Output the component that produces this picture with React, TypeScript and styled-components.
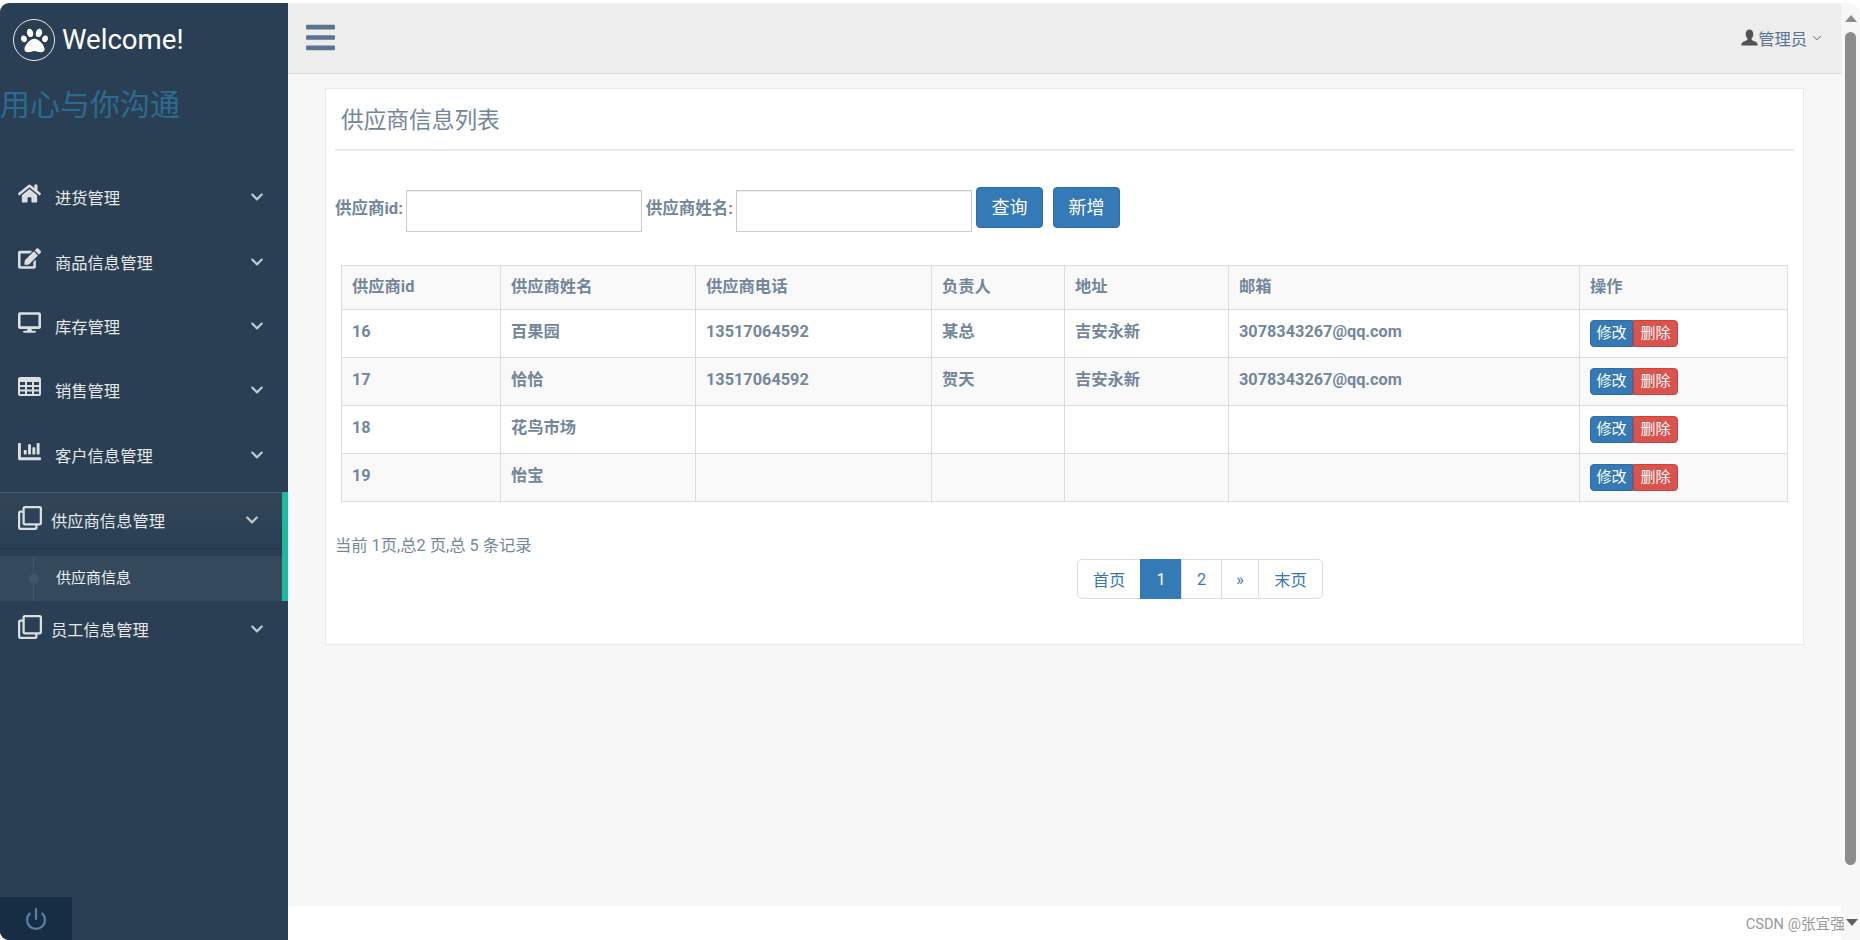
import React from "react";
import styled, { createGlobalStyle } from "styled-components";
import {
  FaBars,
  FaChevronDown,
  FaDesktop,
  FaEdit,
  FaHome,
  FaPaw,
  FaChartBar,
  FaRegClone,
} from "react-icons/fa";
import { ChevronDown, Power } from "lucide-react";

const GlobalStyle = createGlobalStyle`
  html, body {
    margin: 0;
    padding: 0;
    height: 100%;
    overflow: hidden;
    background: #fff;
  }
  * { box-sizing: border-box; }
  body {
    font-family: Roboto, "Noto Sans CJK SC", sans-serif;
    font-size: 16.3px;
    color: #73879c;
  }
`;

const Page = styled.div`
  width: 1860px;
  height: 940px;
  display: flex;
  padding-top: 3px;
  position: relative;
  overflow: hidden;
`;

const Sidebar = styled.aside`
  width: 288px;
  flex: none;
  background: #2a3f54;
  border-radius: 9px 0 0 9px;
  display: flex;
  flex-direction: column;
  color: #ecf0f1;
`;

const Brand = styled.div`
  height: 60px;
  margin-top: 16px;
  padding-left: 13px;
  display: flex;
  align-items: flex-start;
  gap: 7px;
  color: #fff;
  font-size: 27.6px;
  line-height: 42px;
`;

const BrandIcon = styled.span`
  width: 42px;
  height: 42px;
  border: 1px solid #e8e8e8;
  border-radius: 50%;
  display: flex;
  align-items: center;
  justify-content: center;
  font-size: 27px;
`;

const Tagline = styled.div`
  font-size: 30px;
  line-height: 40px;
  color: #2b6b8f;
  height: 80px;
  margin-top: 6px;
`;

const Nav = styled.nav`
  display: flex;
  flex-direction: column;
  flex: 1;
`;

const NavRow = styled.div`
  height: 64.4px;
  flex: none;
  display: flex;
  align-items: center;
  padding: 0 24px 0 18px;
  color: #e7e7e7;
`;

const NavIcon = styled.span<{ $wide?: boolean; $lift?: number }>`
  width: ${(p) => (p.$wide ? 33 : 37)}px;
  flex: none;
  display: flex;
  align-items: center;
  font-size: ${(p) => (p.$wide ? 24 : 23)}px;
  margin-bottom: ${(p) => p.$lift ?? 7}px;
  color: #dcdfe2;
`;

const NavLabel = styled.span`
  flex: 1;
`;

const Chevron = styled(FaChevronDown)`
  font-size: 14px;
  color: #c3c8cd;
`;

const ActiveGroup = styled.div`
  margin-top: 5px;
  border-right: 6px solid #1abb9c;
`;

const ActiveRow = styled(NavRow)`
  height: 57px;
  padding-right: 23px;
  border-top: 1px solid #4a5c6e;
  border-bottom: 1px solid #23364a;
  background: linear-gradient(#334556, #2c4257 60%, #2a3f54);
`;

const LastRow = styled(NavRow)`
  height: 57px;
`;

const Gap = styled.div`
  height: 7px;
  background: #2a3f54;
`;

const SubRow = styled.div`
  height: 45px;
  padding: 0 0 4px 56px;
  display: flex;
  align-items: center;
  font-size: 15px;
  background: #35495d;
  color: #f0f0f0;
  position: relative;
`;

const SubLine = styled.span`
  position: absolute;
  left: 33px;
  top: 0;
  bottom: 0;
  width: 1px;
  background: #425567;
`;

const SubDot = styled.span`
  position: absolute;
  left: 29px;
  top: 18px;
  width: 10px;
  height: 10px;
  border-radius: 50%;
  background: #425567;
`;

const PowerBox = styled.div`
  width: 72px;
  height: 43px;
  background: #172d44;
  color: #5a80a8;
  border-bottom-left-radius: 9px;
  display: flex;
  align-items: center;
  justify-content: center;
  margin-top: auto;
`;

const Main = styled.div`
  flex: 1;
  display: flex;
  flex-direction: column;
  min-width: 0;
`;

const TopBar = styled.header`
  height: 71px;
  flex: none;
  background: #ededed;
  border-bottom: 1px solid #d9dee4;
  display: flex;
  align-items: center;
  justify-content: space-between;
  padding: 0 17px 0 16px;
`;

const MenuButton = styled(FaBars)`
  font-size: 33px;
  color: #5a738e;
  margin-top: -2px;
`;

const UserMenu = styled.div`
  display: flex;
  align-items: center;
  color: #515356;
  margin-top: -1px;
`;

const UserName = styled.span`
  color: #5a738e;
  margin-right: 3px;
`;

const Content = styled.main`
  height: 832px;
  flex: none;
  background: #f7f7f7;
  padding: 14px 37px 0 37px;
`;

const Panel = styled.section`
  height: 557px;
  background: #fff;
  border: 1px solid #e6e9ed;
  padding: 0 9px;
`;

const Title = styled.div`
  height: 62px;
  margin-bottom: 36px;
  border-bottom: 2px solid #e6e9ed;
  padding: 13px 0 0 6px;
  font-size: 22.7px;
  line-height: 38px;
`;

const SearchForm = styled.form`
  display: flex;
  align-items: flex-start;
  height: 78px;
`;

const FieldLabel = styled.label<{ $gap: number }>`
  font-weight: 700;
  font-size: 16.5px;
  line-height: 44px;
  margin-right: ${(p) => p.$gap}px;
`;

const Input = styled.input`
  width: 236px;
  height: 42px;
  margin: 3px 4px 0 0;
  border: 1px solid #ccc;
  background: #fff;
  box-shadow: inset 0 1px 1px rgba(0, 0, 0, 0.075);
`;

const SearchButton = styled.button`
  width: 67px;
  height: 41px;
  margin-right: 10px;
  padding: 0 0 4px;
  border: 1px solid #2e6da4;
  border-radius: 4px;
  background: #337ab7;
  color: #fff;
  font: 400 18px Roboto, "Noto Sans CJK SC", sans-serif;
`;

const Table = styled.table`
  width: 1446px;
  margin-left: 6px;
  border-collapse: collapse;
  table-layout: fixed;
  line-height: 22px;
`;

const Th = styled.th<{ $w: number }>`
  width: ${(p) => p.$w}px;
  height: 44px;
  padding: 0 10px 2px;
  text-align: left;
  font-weight: 700;
  border: 1px solid #ddd;
  background: #f9f9f9;
`;

const Tr = styled.tr<{ $odd: boolean }>`
  background: ${(p) => (p.$odd ? "#f9f9f9" : "#fff")};
`;

const Td = styled.td`
  height: 48px;
  padding: 0 10px 4px;
  font-weight: 700;
  border: 1px solid #ddd;
`;

const ActionGroup = styled.div`
  display: flex;
  margin-top: 4px;
`;

const ActionButton = styled.button<{ $danger?: boolean }>`
  height: 27px;
  width: ${(p) => (p.$danger ? 45 : 43)}px;
  padding: 0;
  border: 1px solid ${(p) => (p.$danger ? "#d43f3a" : "#2e6da4")};
  border-radius: ${(p) => (p.$danger ? "0 4px 4px 0" : "4px 0 0 4px")};
  background: ${(p) => (p.$danger ? "#d9534f" : "#337ab7")};
  color: #fff;
  font: 400 15px/1 Roboto, "Noto Sans CJK SC", sans-serif;
`;

const Summary = styled.div`
  margin-top: 32px;
  line-height: 24px;
`;

const Pager = styled.ul`
  list-style: none;
  display: inline-flex;
  margin: 1px 0 0 742px;
  padding: 0;
`;

const PageItem = styled.li<{ $active?: boolean; $w: number }>`
  width: ${(p) => p.$w}px;
  height: 40px;
  display: flex;
  align-items: center;
  justify-content: center;
  margin-left: -1px;
  color: ${(p) => (p.$active ? "#fff" : "#337ab7")};
  background: ${(p) => (p.$active ? "#337ab7" : "#fff")};
  border: 1px solid ${(p) => (p.$active ? "#337ab7" : "#ddd")};
  &:first-child {
    border-radius: 5px 0 0 5px;
    margin-left: 0;
  }
  &:last-child {
    border-radius: 0 5px 5px 0;
  }
`;

const Scrollbar = styled.div`
  width: 19px;
  flex: none;
  background: #f7f7f7;
  border-top-right-radius: 12px;
  display: flex;
  flex-direction: column;
  align-items: center;
  padding: 12px 2px 0 2px;
`;

const ArrowUp = styled.span`
  width: 0;
  height: 0;
  border: 6.5px solid transparent;
  border-top: 0;
  border-bottom: 7px solid #8c8c8c;
`;

const Thumb = styled.span`
  width: 11px;
  height: 833px;
  margin-top: 10px;
  border-radius: 6px;
  background: #8c8c8c;
`;

const Watermark = styled.div`
  position: absolute;
  right: 15px;
  bottom: 6px;
  font-size: 14.7px;
  line-height: 20px;
  color: #9a9a9a;
  background: #fff;
`;

const ArrowDown = styled.span`
  position: absolute;
  right: 2px;
  bottom: 14px;
  width: 0;
  height: 0;
  border: 6.5px solid transparent;
  border-bottom: 0;
  border-top: 7px solid #5f5f5f;
`;

function TableGlyph() {
  return (
    <svg width="23" height="19" viewBox="0 0 23 19">
      <path
        fill="currentColor"
        fillRule="evenodd"
        d="M2 0h19a2 2 0 0 1 2 2v15a2 2 0 0 1-2 2H2a2 2 0 0 1-2-2V2a2 2 0 0 1 2-2zM2 5v3h5V5zm7 0v3h5V5zm7 0v3h5V5zM2 10v2.500h5V10zm7 0v2.500h5V10zm7 0v2.500h5V10zM2 14.500V17h5v-2.500zm7 0V17h5v-2.500zm7 0V17h5v-2.500z"
      />
    </svg>
  );
}

function UserGlyph() {
  return (
    <svg width="17" height="17" viewBox="0 0 17 17">
      <path
        fill="#515356"
        d="M8.5 0.5c2.4 0 3.8 1.9 3.8 4.4 0 1.9-.8 3.6-1.8 4.6-.3.9.2 1.4 1.2 1.9 2 .9 4.3 1.7 4.8 3.2.1.6.1 1.2.1 1.9H.4c0-.7 0-1.3.1-1.9.5-1.5 2.8-2.3 4.8-3.2 1-.5 1.5-1 1.2-1.9-1-1-1.8-2.7-1.8-4.6 0-2.5 1.4-4.4 3.8-4.4z"
      />
    </svg>
  );
}

const menu = [
  { label: "进货管理", icon: <FaHome /> },
  { label: "商品信息管理", icon: <FaEdit /> },
  { label: "库存管理", icon: <FaDesktop /> },
  { label: "销售管理", icon: <TableGlyph /> },
  { label: "客户信息管理", icon: <FaChartBar /> },
];

const columns = [
  { label: "供应商id", w: 159 },
  { label: "供应商姓名", w: 195 },
  { label: "供应商电话", w: 236 },
  { label: "负责人", w: 133 },
  { label: "地址", w: 164 },
  { label: "邮箱", w: 351 },
  { label: "操作", w: 208 },
];

const rows = [
  ["16", "百果园", "13517064592", "某总", "吉安永新", "3078343267@qq.com"],
  ["17", "恰恰", "13517064592", "贺天", "吉安永新", "3078343267@qq.com"],
  ["18", "花鸟市场", "", "", "", ""],
  ["19", "怡宝", "", "", "", ""],
];

const pages = [
  { label: "首页", w: 64 },
  { label: "1", w: 42, active: true },
  { label: "2", w: 41 },
  { label: "»", w: 38 },
  { label: "末页", w: 65 },
];

function App(): React.ReactElement {
  return (
    <>
      <GlobalStyle />
      <Page>
        <Sidebar>
          <Brand>
            <BrandIcon>
              <FaPaw />
            </BrandIcon>
            Welcome!
          </Brand>
          <Tagline>用心与你沟通</Tagline>
          <Nav>
            {menu.map((item) => (
              <NavRow key={item.label}>
                <NavIcon>{item.icon}</NavIcon>
                <NavLabel>{item.label}</NavLabel>
                <Chevron />
              </NavRow>
            ))}
            <ActiveGroup>
              <ActiveRow>
                <NavIcon $wide $lift={5}>
                  <FaRegClone />
                </NavIcon>
                <NavLabel>供应商信息管理</NavLabel>
                <Chevron />
              </ActiveRow>
              <Gap />
              <SubRow>
                <SubLine />
                <SubDot />
                供应商信息
              </SubRow>
            </ActiveGroup>
            <LastRow>
              <NavIcon $wide $lift={4}>
                <FaRegClone />
              </NavIcon>
              <NavLabel>员工信息管理</NavLabel>
              <Chevron />
            </LastRow>
            <PowerBox>
              <Power size={24} strokeWidth={2.2} />
            </PowerBox>
          </Nav>
        </Sidebar>
        <Main>
          <TopBar>
            <MenuButton />
            <UserMenu>
              <UserGlyph />
              <UserName>管理员</UserName>
              <ChevronDown size={14} strokeWidth={1.5} />
            </UserMenu>
          </TopBar>
          <Content>
            <Panel>
              <Title>供应商信息列表</Title>
              <SearchForm>
                <FieldLabel $gap={3}>供应商id:</FieldLabel>
                <Input />
                <FieldLabel $gap={3}>供应商姓名:</FieldLabel>
                <Input />
                <SearchButton type="button">查询</SearchButton>
                <SearchButton type="button">新增</SearchButton>
              </SearchForm>
              <Table>
                <thead>
                  <tr>
                    {columns.map((c) => (
                      <Th key={c.label} $w={c.w}>
                        {c.label}
                      </Th>
                    ))}
                  </tr>
                </thead>
                <tbody>
                  {rows.map((row, i) => (
                    <Tr key={row[0]} $odd={i % 2 === 1}>
                      {row.map((cell, j) => (
                        <Td key={j}>{cell}</Td>
                      ))}
                      <Td>
                        <ActionGroup>
                          <ActionButton type="button">修改</ActionButton>
                          <ActionButton type="button" $danger>
                            删除
                          </ActionButton>
                        </ActionGroup>
                      </Td>
                    </Tr>
                  ))}
                </tbody>
              </Table>
              <Summary>当前 1页,总2 页,总 5 条记录</Summary>
              <Pager>
                {pages.map((p) => (
                  <PageItem key={p.label} $w={p.w} $active={p.active}>
                    {p.label}
                  </PageItem>
                ))}
              </Pager>
            </Panel>
          </Content>
        </Main>
        <Scrollbar>
          <ArrowUp />
          <Thumb />
        </Scrollbar>
        <Watermark>CSDN @张宜强</Watermark>
        <ArrowDown />
      </Page>
    </>
  );
}

export default App;
